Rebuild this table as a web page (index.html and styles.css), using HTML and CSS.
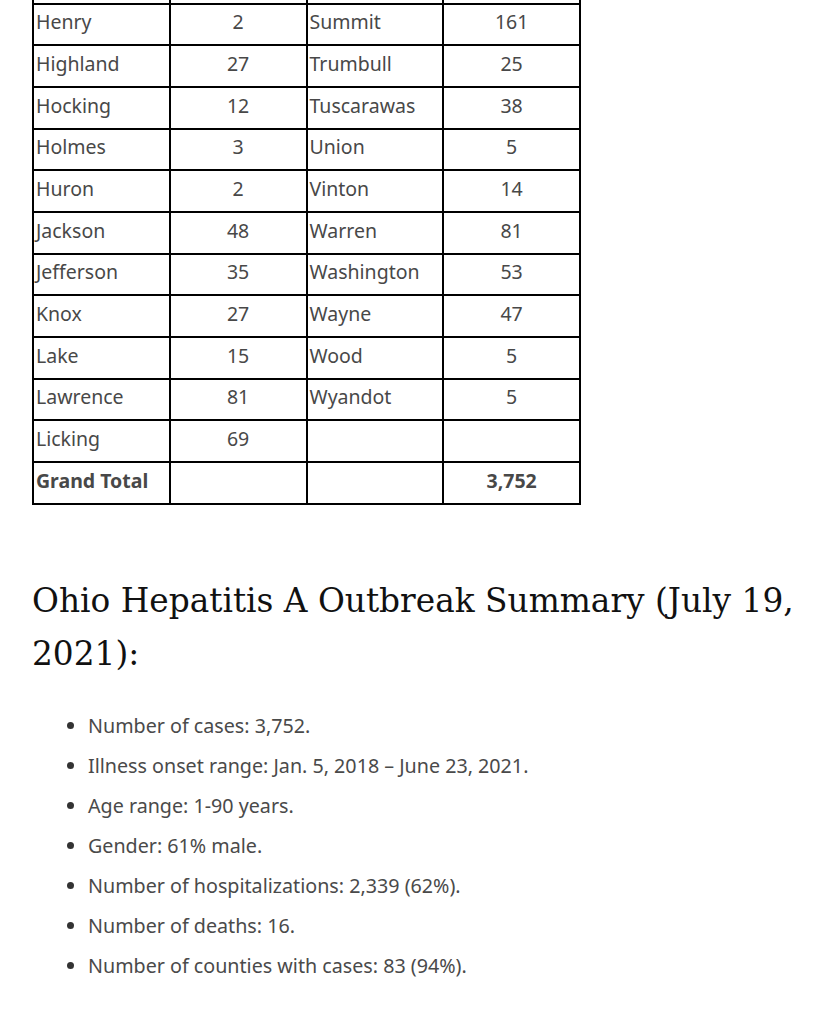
FILE: index.html
```html
<!DOCTYPE html>
<html>
<head>
<meta charset="utf-8">
<link rel="stylesheet" href="styles.css">
</head>
<body>
<div class="page">
<table class="counties">
<tbody>
<tr class="cut"><td></td><td></td><td></td><td></td></tr>
<tr><td>Henry</td><td class="n">2</td><td>Summit</td><td class="n">161</td></tr>
<tr><td>Highland</td><td class="n">27</td><td>Trumbull</td><td class="n">25</td></tr>
<tr><td>Hocking</td><td class="n">12</td><td>Tuscarawas</td><td class="n">38</td></tr>
<tr><td>Holmes</td><td class="n">3</td><td>Union</td><td class="n">5</td></tr>
<tr><td>Huron</td><td class="n">2</td><td>Vinton</td><td class="n">14</td></tr>
<tr><td>Jackson</td><td class="n">48</td><td>Warren</td><td class="n">81</td></tr>
<tr><td>Jefferson</td><td class="n">35</td><td>Washington</td><td class="n">53</td></tr>
<tr><td>Knox</td><td class="n">27</td><td>Wayne</td><td class="n">47</td></tr>
<tr><td>Lake</td><td class="n">15</td><td>Wood</td><td class="n">5</td></tr>
<tr><td>Lawrence</td><td class="n">81</td><td>Wyandot</td><td class="n">5</td></tr>
<tr><td>Licking</td><td class="n">69</td><td></td><td></td></tr>
<tr class="total"><td>Grand Total</td><td></td><td></td><td class="n">3,752</td></tr>
</tbody>
</table>

<h2 class="title">Ohio Hepatitis A Outbreak Summary (July 19, 2021):</h2>

<ul class="facts">
<li>Number of cases: 3,752.</li>
<li>Illness onset range: Jan. 5, 2018 – June 23, 2021.</li>
<li>Age range: 1-90 years.</li>
<li>Gender: 61% male.</li>
<li>Number of hospitalizations: 2,339 (62%).</li>
<li>Number of deaths: 16.</li>
<li>Number of counties with cases: 83 (94%).</li>
</ul>
</div>
</body>
</html>
```

FILE: styles.css
```css
html, body {
  margin: 0;
  padding: 0;
  background: #ffffff;
}
.page {
  padding: 0 0 0 32px;
  font-family: "Source Sans Pro", "Noto Sans", sans-serif;
  color: #4a4a4a;
}
.counties {
  border-collapse: collapse;
  margin-top: -39px;
  table-layout: fixed;
  width: 549px;
}
.counties td {
  border: 2px solid #000;
  height: 35.67px;
  padding: 0 2px 4px 2px;
  font-size: 19.5px;
  line-height: 24px;
  color: #484848;
  width: 25%;
}
.counties td.n {
  text-align: center;
}
.counties .total td {
  font-weight: bold;
}
.title {
  font-family: "DejaVu Serif", serif;
  font-weight: normal;
  font-size: 32.8px;
  line-height: 53px;
  color: #111;
  margin: 70px 0 0 0;
  width: 780px;
}
.facts {
  margin: 33px 0 0 0;
  padding-left: 56px;
  font-size: 19.7px;
  line-height: 24px;
}
.facts li {
  margin-bottom: 16px;
}
.facts li::marker {
  color: #333;
}
```
